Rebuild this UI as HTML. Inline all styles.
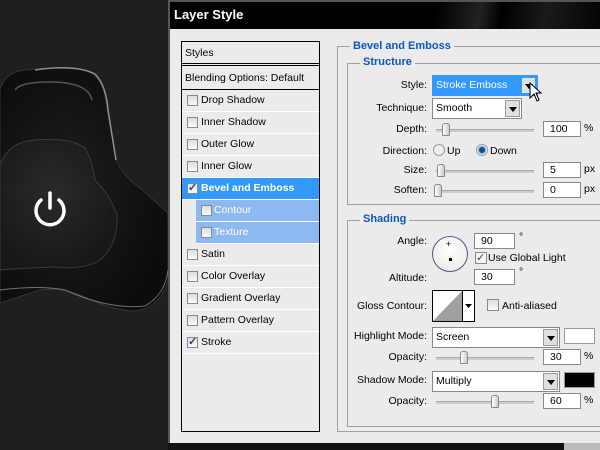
<!DOCTYPE html>
<html><head><style>
*{margin:0;padding:0;box-sizing:border-box}
body{width:600px;height:450px;overflow:hidden;background:#1f1f1f;font-family:Tahoma,"DejaVu Sans","Liberation Sans",sans-serif;font-size:11px;color:#000;position:relative}
.abs{position:absolute}
.dlg{left:168px;top:0;width:440px;height:447px;background:#ebebeb;border:2px solid #555;border-right:none}
.title{left:0;top:0;width:440px;height:27px;background:linear-gradient(100deg,#000 60%,#222 70%,#000 75%,#1a1a1a 85%,#000);color:#fff;font-weight:bold;font-size:13px;padding:5px 0 0 4px;font-family:"Liberation Sans",sans-serif}
.list{left:181px;top:41px;width:139px;height:391px;border:1px solid #000;background:#ebebeb}
.row{position:absolute;left:0;width:137px;height:22px;border-bottom:1px solid #fff;padding:4px 0 0 19px;white-space:nowrap;font-family:"Liberation Sans",sans-serif;font-size:10.5px}
.cb{position:absolute;left:5px;top:5px;width:11px;height:11px;border:1px solid #8a8a8a;background:linear-gradient(#ddd,#fafafa)}
.ck::after{content:"✓";position:absolute;left:0;top:-3px;font-size:11px;color:#2a3d9a;font-weight:bold}
.grp{border:1px solid #a0a0a0}
.lbl{position:absolute;color:#0a57c4;font-weight:bold;background:#ebebeb;padding:0 3px;font-size:11px;font-family:"Liberation Sans",sans-serif}
.t{position:absolute;font-family:"Liberation Sans",sans-serif;font-size:10.5px;white-space:nowrap}
.r{text-align:right}
.in{position:absolute;background:#fff;border:1px solid #888;height:16px;padding:1px 0 0 6px;font-family:"Liberation Sans",sans-serif;font-size:10.5px}
.sel{position:absolute;background:#fff;border:1px solid #888;height:21px;padding:3px 0 0 3px;font-family:"Liberation Sans",sans-serif;font-size:10.5px}
.dd{position:absolute;right:1px;top:1px;width:15px;height:17px;background:#e0e0e0;border:1px solid #999}
.dd::after{content:"";position:absolute;left:3px;top:6px;border:4px solid transparent;border-top:5px solid #000}
.trk{position:absolute;height:3px;background:#ccc;border-top:1px solid #aaa}
.th{position:absolute;width:8px;height:13px;background:linear-gradient(90deg,#fff,#ccc);border:1px solid #888;border-radius:3px 3px 1px 1px}
</style></head><body>
<svg class="abs" style="left:0;top:0" width="170" height="450">
<defs><radialGradient id="g1" cx="0.4" cy="0.5" r="0.6"><stop offset="0" stop-color="#1e1e1e"/><stop offset="1" stop-color="#0c0c0c"/></radialGradient>
<radialGradient id="g2" cx="0.45" cy="0.4" r="0.6"><stop offset="0" stop-color="#2a2a2a"/><stop offset="1" stop-color="#181818"/></radialGradient></defs>
<path d="M0,90 Q5,72 25,70 Q60,66 85,70 Q100,75 105,95 L116,160 Q122,175 140,188 L168,213 L168,280 Q160,308 135,311 Q110,310 80,295 Q60,287 40,290 L0,303 Z" fill="url(#g1)" stroke="#333"/>
<path d="M35,70 Q75,64 95,74 Q106,85 108,110 L116,160" fill="none" stroke="#aaa" stroke-width="1.5" opacity="0.8"/>
<path d="M0,290 Q40,285 65,290 Q110,310 145,306 Q165,295 168,270" fill="none" stroke="#999" stroke-width="1" opacity="0.7"/>
<path d="M15,90 Q20,82 50,82 Q88,82 92,100" fill="none" stroke="#555" stroke-width="1.5"/>
<path d="M0,165 Q8,142 35,140 Q70,137 85,148 Q92,160 95,180 Q110,195 117,215 Q118,245 100,260 Q85,270 55,267 Q25,268 0,270 Z" fill="url(#g2)" stroke="#3a3a3a"/>
<path d="M41,200 A14,14 0 1 0 59,200" fill="none" stroke="#fff" stroke-width="3.5" stroke-linecap="round"/>
<line x1="50" y1="193" x2="50" y2="208" stroke="#fff" stroke-width="3.5" stroke-linecap="round"/>
</svg>
<div class="abs dlg"><div class="abs title">Layer Style</div></div>
<div class="abs list">
<div class="row" style="top:0;height:24px;border-bottom:3px double #000;padding-left:3px;padding-top:5px">Styles</div>
<div class="row" style="top:25px;height:23px;border-bottom:1px solid #000;padding-left:3px;padding-top:5px">Blending Options: Default</div>
<div class="row" style="top:48px"><span class="cb"></span>Drop Shadow</div>
<div class="row" style="top:70px"><span class="cb"></span>Inner Shadow</div>
<div class="row" style="top:92px"><span class="cb"></span>Outer Glow</div>
<div class="row" style="top:114px"><span class="cb"></span>Inner Glow</div>
<div class="row" style="top:136px;background:#3399ff;color:#fff;font-weight:bold"><span class="cb ck"></span>Bevel and Emboss</div>
<div class="row" style="top:158px;left:14px;width:123px;background:#8cbaf0;color:#fff;padding-left:18px"><span class="cb"></span>Contour</div>
<div class="row" style="top:180px;left:14px;width:123px;background:#8cbaf0;color:#fff;padding-left:18px"><span class="cb"></span>Texture</div>
<div class="row" style="top:202px"><span class="cb"></span>Satin</div>
<div class="row" style="top:224px"><span class="cb"></span>Color Overlay</div>
<div class="row" style="top:246px"><span class="cb"></span>Gradient Overlay</div>
<div class="row" style="top:268px"><span class="cb"></span>Pattern Overlay</div>
<div class="row" style="top:290px"><span class="cb ck"></span>Stroke</div>
</div>
<div class="abs grp" style="left:337px;top:46px;width:270px;height:386px"></div>
<div class="lbl" style="left:350px;top:40px">Bevel and Emboss</div>
<div class="abs grp" style="left:347px;top:63px;width:260px;height:142px"></div>
<div class="lbl" style="left:360px;top:56px">Structure</div>
<div class="t r" style="left:360px;width:67px;top:79px">Style:</div>
<div class="sel" style="left:432px;top:75px;width:106px;background:#3399ff;border:1px solid #3399ff;color:#fff">Stroke Emboss<span class="dd" style="border-color:#3399ff"></span></div>
<svg class="abs" style="left:529px;top:82px" width="16" height="22"><path d="M1,1 L1,16 L5,12 L8,19 L10,18 L7,11 L12,11 Z" fill="#fff" stroke="#000"/></svg>
<div class="t r" style="left:360px;width:67px;top:102px">Technique:</div>
<div class="sel" style="left:432px;top:98px;width:90px">Smooth<span class="dd"></span></div>
<div class="t r" style="left:360px;width:67px;top:123px">Depth:</div>
<div class="trk" style="left:436px;top:129px;width:98px"></div><div class="th" style="left:442px;top:123px"></div>
<div class="in" style="left:543px;top:121px;width:38px">100</div><div class="t" style="left:584px;top:122px">%</div>
<div class="t r" style="left:360px;width:67px;top:145px">Direction:</div>
<div class="abs" style="left:433px;top:144px;width:12px;height:12px;border-radius:50%;border:1px solid #999;background:#eee"></div><div class="t" style="left:447px;top:145px">Up</div>
<div class="abs" style="left:476px;top:144px;width:12px;height:12px;border-radius:50%;border:1px solid #999;background:radial-gradient(#0a4f90 30%,#3a8ad0 45%,#eee 60%)"></div><div class="t" style="left:490px;top:145px">Down</div>
<div class="t r" style="left:360px;width:67px;top:164px">Size:</div>
<div class="trk" style="left:436px;top:170px;width:98px"></div><div class="th" style="left:437px;top:164px"></div>
<div class="in" style="left:543px;top:162px;width:38px">5</div><div class="t" style="left:584px;top:163px">px</div>
<div class="t r" style="left:360px;width:67px;top:184px">Soften:</div>
<div class="trk" style="left:436px;top:190px;width:98px"></div><div class="th" style="left:434px;top:184px"></div>
<div class="in" style="left:543px;top:182px;width:38px">0</div><div class="t" style="left:584px;top:183px">px</div>
<div class="abs grp" style="left:347px;top:220px;width:260px;height:207px"></div>
<div class="lbl" style="left:360px;top:213px">Shading</div>
<div class="t r" style="left:360px;width:67px;top:235px">Angle:</div>
<div class="abs" style="left:432px;top:236px;width:36px;height:36px;border-radius:50%;border:1px solid #4a5a8a;background:radial-gradient(circle at 50% 40%,#fff,#e6e6e0)"></div>
<div class="t" style="left:446px;top:239px;font-size:9px">+</div>
<div class="abs" style="left:449px;top:258px;width:3px;height:3px;background:#000"></div>
<div class="in" style="left:474px;top:233px;width:41px">90</div><div class="t" style="left:519px;top:231px">°</div>
<div class="abs" style="left:475px;top:252px;width:12px;height:12px;border:1px solid #8a8a8a;background:#f4f4f4;color:#2a3d9a;font-weight:bold;font-size:11px;line-height:10px">✓</div>
<div class="t" style="left:488px;top:252px">Use Global Light</div>
<div class="t r" style="left:360px;width:67px;top:272px">Altitude:</div>
<div class="in" style="left:474px;top:269px;width:41px">30</div><div class="t" style="left:519px;top:266px">°</div>
<div class="t r" style="left:350px;width:77px;top:300px">Gloss Contour:</div>
<svg class="abs" style="left:432px;top:290px" width="43" height="32"><rect x="0.5" y="0.5" width="42" height="31" fill="#fff" stroke="#000"/><path d="M1,31 L30,1 L30,31 Z" fill="#a0a0a0"/><line x1="30.5" y1="0" x2="30.5" y2="32" stroke="#000"/><path d="M33,14 L40,14 L36.5,18 Z" fill="#000"/></svg>
<div class="abs" style="left:487px;top:299px;width:12px;height:12px;border:1px solid #8a8a8a;background:linear-gradient(#ddd,#fafafa)"></div>
<div class="t" style="left:502px;top:300px">Anti-aliased</div>
<div class="t r" style="left:350px;width:77px;top:330px">Highlight Mode:</div>
<div class="sel" style="left:432px;top:327px;width:128px">Screen<span class="dd"></span></div>
<div class="abs" style="left:564px;top:328px;width:31px;height:16px;background:#fff;border:1px solid #999"></div>
<div class="t r" style="left:350px;width:77px;top:351px">Opacity:</div>
<div class="trk" style="left:436px;top:357px;width:98px"></div><div class="th" style="left:460px;top:351px"></div>
<div class="in" style="left:543px;top:349px;width:38px">30</div><div class="t" style="left:584px;top:350px">%</div>
<div class="t r" style="left:350px;width:77px;top:374px">Shadow Mode:</div>
<div class="sel" style="left:432px;top:371px;width:128px">Multiply<span class="dd"></span></div>
<div class="abs" style="left:564px;top:372px;width:31px;height:16px;background:#000;border:1px solid #999"></div>
<div class="t r" style="left:350px;width:77px;top:395px">Opacity:</div>
<div class="trk" style="left:436px;top:401px;width:98px"></div><div class="th" style="left:491px;top:395px"></div>
<div class="in" style="left:543px;top:393px;width:38px">60</div><div class="t" style="left:584px;top:394px">%</div>
<div class="abs" style="left:168px;top:443px;width:432px;height:7px;background:#111"></div>
<div class="abs" style="left:564px;top:443px;width:36px;height:7px;background:#bbb"></div>
</body></html>
